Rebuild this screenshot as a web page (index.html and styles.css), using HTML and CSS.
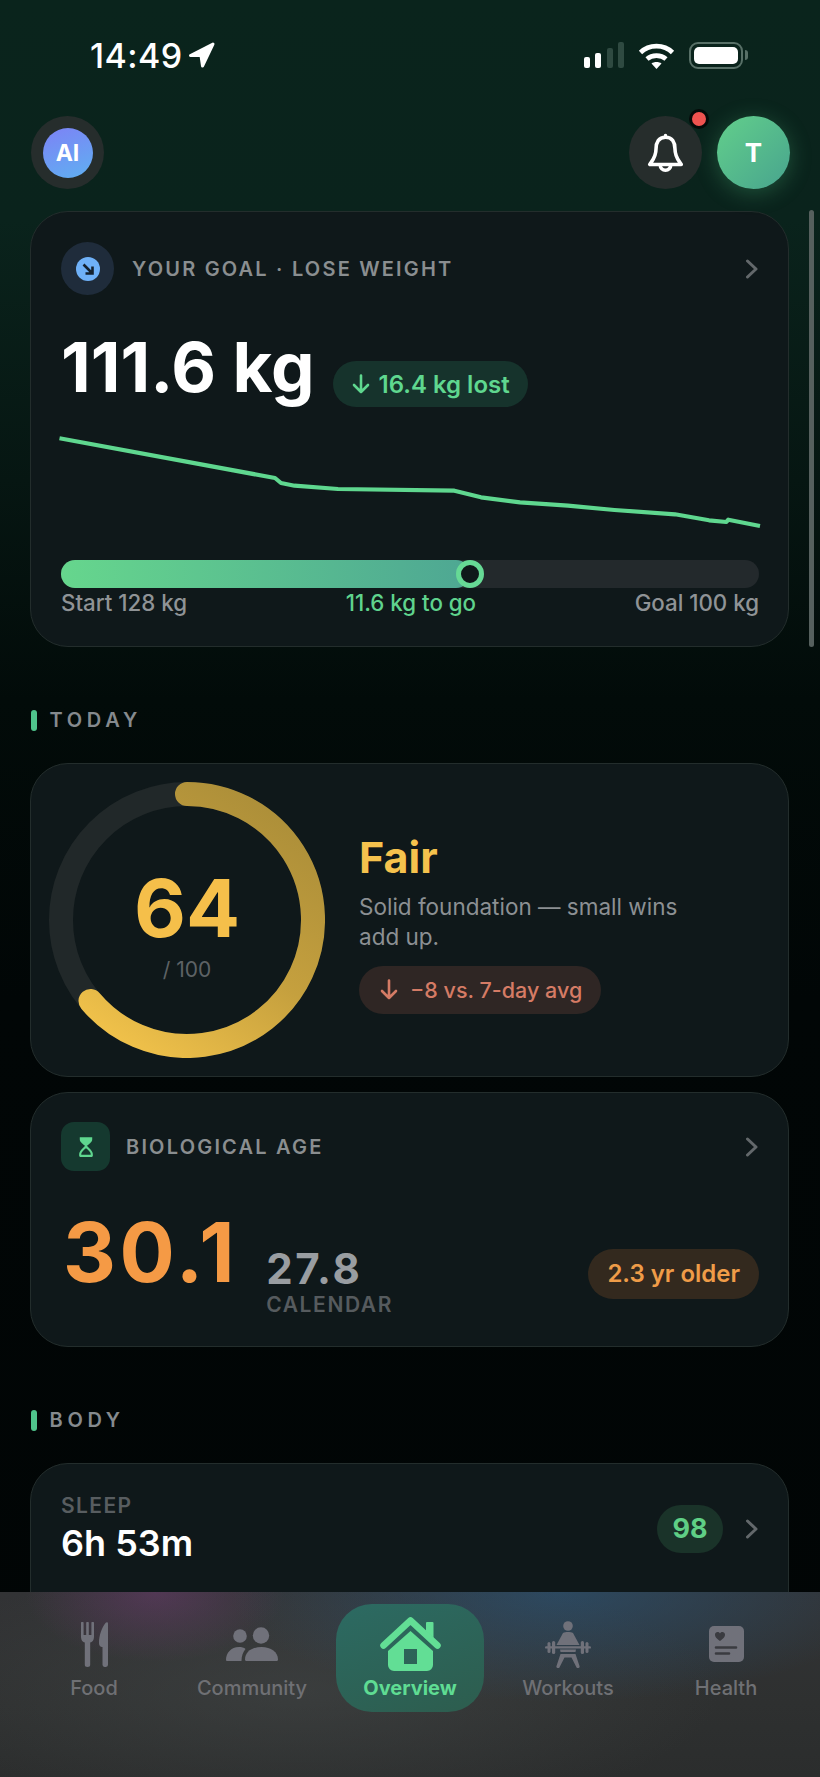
FILE: index.html
```html
<!DOCTYPE html>
<html lang="en">
<head>
    <meta charset="UTF-8">
    <meta name="viewport" content="width=device-width, initial-scale=1.0">
    <title>Overview</title>
    <link rel="stylesheet" href="styles.css">
</head>
<body>
    <div class="page">
        <div class="status">
            <div class="status-left">
                <span class="time">14:49</span>
                <svg class="loc" width="27" height="26" viewBox="0 0 27 26"><path d="M25 2 L2.5 13.5 H13 L14.5 24 Z"/></svg>
            </div>
            <div class="status-right">
                <div class="signal">
                    <span class="sig s1"></span><span class="sig s2"></span><span class="sig s3"></span><span class="sig s4"></span>
                </div>
                <svg class="wifi" width="37" height="27" viewBox="0 0 37 27">
                    <path class="wifi-arc" d="M2.5 10.5 C11 2 26 2 34.5 10.5"/>
                    <path class="wifi-arc" d="M9 17 C14 12.5 23 12.5 28 17"/>
                    <path class="wifi-dot" d="M13.5 21.5 C16 19.5 21 19.5 23.5 21.5 L18.5 27 Z"/>
                </svg>
                <div class="battery"><div class="battery-body"><div class="battery-fill"></div></div><div class="battery-tip"></div></div>
            </div>
        </div>

        <div class="content">
            <div class="top">
                <div class="round-btn"><div class="ai">AI</div></div>
                <div class="top-right">
                    <div class="round-btn bell-btn">
                        <svg width="39" height="41" viewBox="0 0 37 39" class="bell">
                            <path d="M18.5 4 C12 4 9.5 9 9.5 15 C9.5 23 6 26 3.5 30 H33.5 C31 26 27.5 23 27.5 15 C27.5 9 25 4 18.5 4 Z M18.5 4 V2.5"/>
                            <path d="M13.5 30.5 a5 5 0 0 0 10 0"/>
                        </svg>
                        <span class="dot"></span>
                    </div>
                    <div class="avatar">T</div>
                </div>
            </div>

            <div class="card goal">
                <div class="card-head">
                    <div class="goal-icon">
                        <div class="goal-icon-in">
                            <svg width="14" height="14" viewBox="0 0 14 14"><path d="M2.5 2.5 L11 11 M11.5 4.5 V11.5 H4.5"/></svg>
                        </div>
                    </div>
                    <span class="card-title goal-title">YOUR GOAL · LOSE WEIGHT</span>
                    <svg class="chev" width="14" height="20" viewBox="0 0 14 20"><path d="M2.5 2 L11 10 L2.5 18"/></svg>
                </div>

                <div class="weight-row">
                    <span class="weight">111.6 kg</span>
                    <span class="lost">
                        <svg width="18" height="20" viewBox="0 0 18 20"><path d="M9 1.5 V18 M2 11 L9 18 L16 11"/></svg>
                        16.4 kg lost
                    </span>
                </div>

                <svg class="trend" width="698" height="100" viewBox="-1 0 698 100">
                    <path d="M-2.5 8.3 L213 48 L219 53 L232.5 55.7 L276 59 L392.4 60.7 L419 67.3 L458 72.3 L506 75.7 L552.4 80 L613 84.3 L647 90.3 L664.4 92 L666.3 89.7 L698 96"/>
                </svg>

                <div class="bar">
                    <div class="bar-fill" style="width: 409px"><span class="thumb"></span></div>
                </div>
                <div class="bar-labels">
                    <span>Start 128 kg</span>
                    <span class="to-go">11.6 kg to go</span>
                    <span>Goal 100 kg</span>
                </div>
            </div>

            <div class="section"><span class="section-bar"></span>TODAY</div>

            <div class="card score">
                <div class="ring">
                    <svg width="276" height="276" viewBox="0 0 276 276">
                        <defs>
                            <linearGradient id="ringGrad" gradientUnits="userSpaceOnUse" x1="230" y1="30" x2="70" y2="260">
                                <stop offset="0" stop-color="#ad8f39"/>
                                <stop offset="0.5" stop-color="#c5a03e"/>
                                <stop offset="1" stop-color="#f0c14a"/>
                            </linearGradient>
                        </defs>
                        <circle class="ring-bg" cx="138" cy="138" r="126"/>
                        <path class="ring-val" d="M138 12 A126 126 0 1 1 41.5 219"/>
                    </svg>
                    <div class="ring-text">
                        <div class="ring-num">64</div>
                        <div class="ring-sub">/ 100</div>
                    </div>
                </div>
                <div class="score-info">
                    <div class="score-name">Fair</div>
                    <div class="score-desc">Solid foundation — small wins add up.</div>
                    <span class="score-pill">
                        <svg width="18" height="21" viewBox="0 0 18 21"><path d="M9 1.5 V19 M2 12 L9 19 L16 12"/></svg>
                        −8 vs. 7-day avg
                    </span>
                </div>
            </div>

            <div class="card bio">
                <div class="card-head">
                    <div class="bio-icon">
                        <svg width="16" height="23" viewBox="0 0 18 24">
                            <path class="glass-fill" d="M2 1.5 H16 V4 C16 7 12 9.5 9 12 C6 9.5 2 7 2 4 Z"/>
                            <path class="glass-line" d="M2.5 22.5 H15.5 V20.5 C15.5 17 11 14.5 9 12 C7 14.5 2.5 17 2.5 20.5 Z"/>
                        </svg>
                    </div>
                    <span class="card-title bio-title">BIOLOGICAL AGE</span>
                    <svg class="chev" width="14" height="20" viewBox="0 0 14 20"><path d="M2.5 2 L11 10 L2.5 18"/></svg>
                </div>
                <div class="bio-row">
                    <span class="bio-num">30.1</span>
                    <div class="calendar">
                        <div class="cal-num">27.8</div>
                        <div class="cal-label">CALENDAR</div>
                    </div>
                    <span class="older">2.3 yr older</span>
                </div>
            </div>

            <div class="section"><span class="section-bar"></span>BODY</div>

            <div class="card sleep">
                <div>
                    <div class="sleep-label">SLEEP</div>
                    <div class="sleep-val">6h 53m</div>
                </div>
                <span class="sleep-score">98</span>
                <svg class="chev" width="14" height="20" viewBox="0 0 14 20"><path d="M2.5 2 L11 10 L2.5 18"/></svg>
            </div>
        </div>

        <div class="scrollbar"></div>

        <div class="tabbar">
            <div class="tab">
                <div class="tab-icon">
                    <svg width="27" height="45" viewBox="0 0 27 45">
                        <path d="M0 1 a1 1 0 0 1 2.6 0 V13 H5.2 V1 a1 1 0 0 1 2.6 0 V13 H10.4 V1 a1 1 0 0 1 2.6 0 V15 C13 18.5 11 20 9.2 20.5 V42.8 a2.7 2.2 0 0 1 -5.4 0 V20.5 C2 20 0 18.5 0 15 Z"/>
                        <path d="M27 1.5 C27 0 25.5 -0.3 24.5 1 C20.5 6 18 14 18 20.5 C18 24 19.5 25 21.5 25 V42.8 a2.7 2.2 0 0 0 5.5 0 Z"/>
                    </svg>
                </div>
                <span class="tab-label">Food</span>
            </div>
            <div class="tab">
                <div class="tab-icon">
                    <svg width="52" height="34" viewBox="0 0 52 34">
                        <circle cx="14" cy="9" r="6.8"/>
                        <circle cx="35" cy="8.5" r="8.2"/>
                        <path d="M0 33 C0 26 5 20 13 20 C15.5 20 18 20.5 19.5 22 C17 25 15.5 29 15.5 34 H1 a1 1 0 0 1 -1 -1 Z"/>
                        <path d="M19 32.5 C19 25 26 20 35.5 20 C45 20 52 25 52 32.5 a1.5 1.5 0 0 1 -1.5 1.5 H20.5 a1.5 1.5 0 0 1 -1.5 -1.5 Z"/>
                    </svg>
                </div>
                <span class="tab-label">Community</span>
            </div>
            <div class="tab tab-active">
                <div class="tab-icon">
                    <svg width="61" height="54" viewBox="0 0 61 54">
                        <path class="home-body" d="M30.5 14 L53 34 V48 a6 6 0 0 1 -6 6 H14 a6 6 0 0 1 -6 -6 V34 Z M24 32 V47 H37 V32 Z"/>
                        <path class="home-roof" d="M3.5 28.5 L30.5 3.5 L57.5 28.5"/>
                        <path class="home-chim" d="M46 6 a1 1 0 0 1 1 -1 H52.5 a1 1 0 0 1 1 1 V21 L46 14 Z"/>
                    </svg>
                </div>
                <span class="tab-label">Overview</span>
            </div>
            <div class="tab">
                <div class="tab-icon">
                    <svg width="46" height="47" viewBox="0 0 46 47">
                        <circle cx="23" cy="5" r="4.8"/>
                        <path d="M18 12 C20.5 10.8 25.5 10.8 28 12 L34.5 24 H11.5 Z"/>
                        <path d="M15 28.5 H31 L30.5 31 H15.5 Z"/>
                        <path d="M15.5 33 H30.5 L34.5 45 a1.6 1.6 0 0 1 -3.2 1 L26.5 36.5 H19.5 L14.7 46 a1.6 1.6 0 0 1 -3.2 -1 Z"/>
                        <rect x="0" y="25.2" width="46" height="2.4" rx="1.2"/>
                        <rect x="2.5" y="21" width="3" height="11" rx="1.5"/>
                        <rect x="7" y="20" width="3.2" height="13" rx="1.5"/>
                        <rect x="35.8" y="20" width="3.2" height="13" rx="1.5"/>
                        <rect x="40.5" y="21" width="3" height="11" rx="1.5"/>
                    </svg>
                </div>
                <span class="tab-label">Workouts</span>
            </div>
            <div class="tab">
                <div class="tab-icon">
                    <svg width="35" height="36" viewBox="0 0 35 36">
                        <rect width="35" height="36" rx="5"/>
                        <path class="health-mark" d="M11 15 C7 12 6 10.5 6 8.5 C6 6 9.5 5 11 7.5 C12.5 5 16 6 16 8.5 C16 10.5 15 12 11 15 Z"/>
                        <path class="health-line" d="M7 21.5 H27 M7 27.5 H20"/>
                    </svg>
                </div>
                <span class="tab-label">Health</span>
            </div>
        </div>
    </div>
</body>
</html>
```

FILE: styles.css
```css
body {
    margin: 0;
    padding: 0;
    background-color: #000;
    font-family: Inter, "Liberation Sans", sans-serif;
}
.page {
    position: relative;
    width: 820px;
    height: 1777px;
    overflow: hidden;
    background: linear-gradient(180deg, #0a241c 0, #0a231c 220px, #061612 480px, #020b09 700px, #010606 1000px, #010505 1777px);
}

/* status bar */
.status {
    height: 110px;
    display: flex;
    align-items: center;
    justify-content: space-between;
    padding: 0 72px 0 90px;
}
.status-left {
    display: flex;
    align-items: center;
    gap: 6px;
}
.time {
    font-size: 34px;
    font-weight: 500;
    color: #fff;
    letter-spacing: 0.4px;
}
.loc path {
    fill: #fff;
    stroke: #fff;
    stroke-width: 3;
    stroke-linejoin: round;
}
.status-right {
    display: flex;
    align-items: center;
    gap: 14px;
}
.signal {
    display: flex;
    align-items: flex-end;
    gap: 5.5px;
    height: 26px;
}
.sig {
    width: 6px;
    border-radius: 2px;
    background-color: #fff;
}
.s1 { height: 11px; }
.s2 { height: 15px; }
.s3 { height: 20px; background-color: #2f4a41; }
.s4 { height: 26px; background-color: #2f4a41; }
.wifi-arc {
    fill: none;
    stroke: #fff;
    stroke-width: 4.6;
}
.wifi-dot {
    fill: #fff;
}
.battery {
    display: flex;
    align-items: center;
    gap: 2px;
}
.battery-body {
    box-sizing: border-box;
    width: 54px;
    height: 27px;
    padding: 3px;
    border: 2.5px solid #587067;
    border-radius: 9px;
}
.battery-fill {
    height: 100%;
    border-radius: 5px;
    background-color: #fff;
}
.battery-tip {
    width: 3px;
    height: 10px;
    border-radius: 0 3px 3px 0;
    background-color: #587067;
}

.content {
    padding: 6px 31px 0 30px;
}

/* top row */
.top {
    display: flex;
    justify-content: space-between;
    align-items: center;
    height: 73px;
    padding-left: 1px;
    margin: 0 -1px 22px 0;
}
.top-right {
    display: flex;
    gap: 15px;
}
.round-btn {
    position: relative;
    width: 73px;
    height: 73px;
    border-radius: 50%;
    background-color: #262d2c;
    display: flex;
    align-items: center;
    justify-content: center;
}
.ai {
    width: 50px;
    height: 50px;
    border-radius: 50%;
    background: linear-gradient(160deg, #7d82f5, #5fb0f2);
    color: #fff;
    font-size: 23px;
    font-weight: 700;
    line-height: 50px;
    text-align: center;
}
.bell {
    margin-top: 2px;
}
.bell path {
    fill: none;
    stroke: #fff;
    stroke-width: 3.4;
    stroke-linecap: round;
    stroke-linejoin: round;
}
.dot {
    position: absolute;
    top: -7px;
    right: -7px;
    box-sizing: border-box;
    width: 20px;
    height: 20px;
    border-radius: 50%;
    background-color: #ef5350;
    border: 3px solid #050a09;
}
.avatar {
    width: 73px;
    height: 73px;
    border-radius: 50%;
    background: linear-gradient(135deg, #62cf8b, #48a48e);
    box-shadow: 0 4px 22px rgba(90, 210, 140, 0.28);
    color: #fff;
    font-size: 26px;
    font-weight: 700;
    line-height: 73px;
    text-align: center;
}

/* cards */
.card {
    background-color: #0f181a;
    border: 1px solid #232d2c;
    border-radius: 38px;
}
.card-head {
    display: flex;
    align-items: center;
}
.card-title {
    flex: 1;
    font-size: 20px;
    font-weight: 600;
    letter-spacing: 2.2px;
    color: #8a8e90;
}
.chev path {
    fill: none;
    stroke: #63686b;
    stroke-width: 3;
    stroke-linecap: round;
    stroke-linejoin: round;
}

/* goal */
.goal {
    padding: 30px 29px 31px 30px;
}
.goal-icon {
    width: 53px;
    height: 53px;
    border-radius: 50%;
    background-color: #1f2c3b;
    display: flex;
    align-items: center;
    justify-content: center;
}
.goal-icon-in {
    width: 24px;
    height: 24px;
    border-radius: 50%;
    background-color: #6fb1f8;
    display: flex;
    align-items: center;
    justify-content: center;
}
.goal-icon-in path {
    fill: none;
    stroke: #14212e;
    stroke-width: 2.6;
}
.goal-title {
    margin-left: 18px;
}
.weight-row {
    display: flex;
    align-items: flex-start;
    margin-top: 40px;
}
.weight {
    font-size: 69px;
    font-weight: 700;
    line-height: 64px;
    color: #fff;
}
.lost {
    display: flex;
    align-items: center;
    gap: 9px;
    height: 46px;
    margin: 26px 0 0 18px;
    padding: 0 18px 0 19px;
    border-radius: 23px;
    background-color: #16332c;
    color: #5fd78f;
    font-size: 24px;
    font-weight: 600;
}
.lost path, .score-pill path {
    fill: none;
    stroke: currentColor;
    stroke-width: 2.6;
    stroke-linecap: round;
    stroke-linejoin: round;
}
.trend {
    display: block;
    margin-top: 23px;
    overflow: visible;
}
.trend path {
    fill: none;
    stroke: #5fd78f;
    stroke-width: 4.2;
    stroke-linejoin: round;
}
.bar {
    margin-top: 30px;
    height: 28px;
    border-radius: 14px;
    background-color: #23292c;
}
.bar-fill {
    position: relative;
    height: 100%;
    border-radius: 14px;
    background: linear-gradient(90deg, #66d68d, #4ea793);
}
.thumb {
    position: absolute;
    right: -14px;
    top: 0;
    box-sizing: border-box;
    width: 28px;
    height: 28px;
    border-radius: 50%;
    border: 5.5px solid #66d995;
    background-color: #0f181a;
}
.bar-labels {
    display: flex;
    justify-content: space-between;
    margin-top: 3px;
    font-size: 22.3px;
    font-weight: 500;
    line-height: 24px;
    color: #8f9396;
}
.to-go {
    color: #5fd38d;
}

/* section labels */
.section {
    display: flex;
    align-items: center;
    gap: 13px;
    height: 20px;
    margin: 63px 0 33px 1px;
    font-size: 20px;
    font-weight: 600;
    letter-spacing: 4.7px;
    color: #858a8e;
}
.section-bar {
    width: 5.5px;
    height: 21px;
    border-radius: 3px;
    background-color: #4fc48c;
}

/* score */
.score {
    display: flex;
    align-items: center;
    padding: 18px;
}
.ring {
    display: grid;
    place-items: center;
    flex: none;
}
.ring svg, .ring-text {
    grid-area: 1 / 1;
}
.ring-bg {
    fill: none;
    stroke: #212829;
    stroke-width: 24;
}
.ring-val {
    fill: none;
    stroke: url(#ringGrad);
    stroke-width: 24;
    stroke-linecap: round;
}
.ring-text {
    margin-top: 10px;
    text-align: center;
}
.ring-num {
    font-size: 80px;
    font-weight: 700;
    line-height: 80px;
    color: #f5bf4a;
}
.ring-sub {
    margin-top: 9px;
    font-size: 21px;
    line-height: 26px;
    color: #5d6265;
}
.score-info {
    margin-left: 34px;
    padding-top: 5px;
}
.score-name {
    font-size: 43px;
    font-weight: 700;
    line-height: 50px;
    color: #f5c24d;
}
.score-desc {
    max-width: 340px;
    margin-top: 10px;
    font-size: 22.5px;
    line-height: 30px;
    color: #8c9093;
}
.score-pill {
    display: inline-flex;
    align-items: center;
    gap: 12px;
    height: 48px;
    margin-top: 14px;
    padding: 0 19px 0 21px;
    border-radius: 24px;
    background-color: #2f2624;
    color: #d57b65;
    font-size: 21.5px;
    font-weight: 500;
}

/* biological age */
.bio {
    margin-top: 15px;
    padding: 29px 29px 29px 30px;
}
.bio-icon {
    width: 49px;
    height: 49px;
    border-radius: 13px;
    background-color: #15392f;
    display: flex;
    align-items: center;
    justify-content: center;
}
.glass-fill {
    fill: #5fd78f;
}
.glass-line {
    fill: none;
    stroke: #5fd78f;
    stroke-width: 2.4;
    stroke-linejoin: round;
}
.bio-title {
    margin-left: 16px;
}
.bio-row {
    display: flex;
    align-items: flex-start;
    margin-top: 40px;
}
.bio-num {
    font-size: 82px;
    font-weight: 700;
    line-height: 84px;
    letter-spacing: 3.5px;
    color: #f59a45;
    padding-left: 2px;
}
.calendar {
    margin: 36px 0 0 28px;
}
.cal-num {
    font-size: 42px;
    font-weight: 700;
    line-height: 44px;
    letter-spacing: 2.6px;
    color: #999da1;
}
.cal-label {
    margin-top: 2px;
    font-size: 21px;
    font-weight: 600;
    line-height: 24px;
    letter-spacing: 1.6px;
    color: #565b5e;
}
.older {
    margin: 38px 0 0 auto;
    height: 50px;
    padding: 0 19px;
    border-radius: 25px;
    background-color: #33291e;
    color: #ef9c48;
    font-size: 24px;
    font-weight: 600;
    line-height: 50px;
}

/* sleep */
.sleep {
    display: flex;
    align-items: flex-start;
    padding: 30px 29px 120px 30px;
}
.sleep > div {
    flex: 1;
}
.sleep-label {
    font-size: 21px;
    font-weight: 600;
    line-height: 24px;
    letter-spacing: 1.4px;
    color: #585d60;
}
.sleep-val {
    margin-top: 5px;
    font-size: 36px;
    font-weight: 600;
    line-height: 40px;
    color: #fff;
}
.sleep-score {
    width: 66px;
    height: 48px;
    margin: 11px 22px 0 0;
    border-radius: 24px;
    background-color: #1a3329;
    color: #5fcf85;
    font-size: 27px;
    font-weight: 700;
    line-height: 48px;
    text-align: center;
}
.sleep .chev {
    margin-top: 25px;
}

.scrollbar {
    position: absolute;
    left: 809px;
    top: 210px;
    width: 5px;
    height: 437px;
    border-radius: 3px;
    background-color: #56605e;
}

/* tab bar */
.tabbar {
    position: absolute;
    left: 0;
    right: 0;
    bottom: 0;
    height: 185px;
    box-sizing: border-box;
    display: flex;
    padding: 12px 15px 0;
    background:
        radial-gradient(ellipse 130px 70px at 155px 0, rgba(118, 60, 120, 0.45), transparent),
        radial-gradient(ellipse 330px 110px at 560px 0, rgba(40, 90, 130, 0.55), transparent),
        radial-gradient(ellipse 420px 130px at 300px 100px, rgba(70, 74, 74, 0.5), transparent),
        linear-gradient(180deg, #323335, #2e3030 60%, #2b2d2d);
}
.tab {
    box-sizing: border-box;
    width: 158px;
    height: 108px;
    padding-top: 10px;
    display: flex;
    flex-direction: column;
    align-items: center;
    color: #6f7074;
}
.tab-icon {
    height: 60px;
    margin-bottom: 2px;
    display: flex;
    align-items: center;
    justify-content: center;
}
.tab-icon svg {
    fill: #70717a;
}
.tab-label {
    font-size: 20px;
    font-weight: 500;
    line-height: 24px;
}
.tab-active {
    width: 148px;
    margin: 0 5px;
    border-radius: 36px;
    background: linear-gradient(160deg, #2c6a62, #2d5d4e);
    color: #5fdc93;
}
.tab-active .tab-label {
    font-weight: 700;
}
.tab-icon .home-body, .tab-icon .home-chim {
    fill: #62de95;
    fill-rule: evenodd;
}
.home-roof {
    fill: none;
    stroke: #62de95;
    stroke-width: 6.5;
    stroke-linecap: round;
    stroke-linejoin: round;
}
.tab-icon .health-mark {
    fill: #3a3b40;
}
.health-line {
    fill: none;
    stroke: #3a3b40;
    stroke-width: 2.6;
    stroke-linecap: round;
}
```
